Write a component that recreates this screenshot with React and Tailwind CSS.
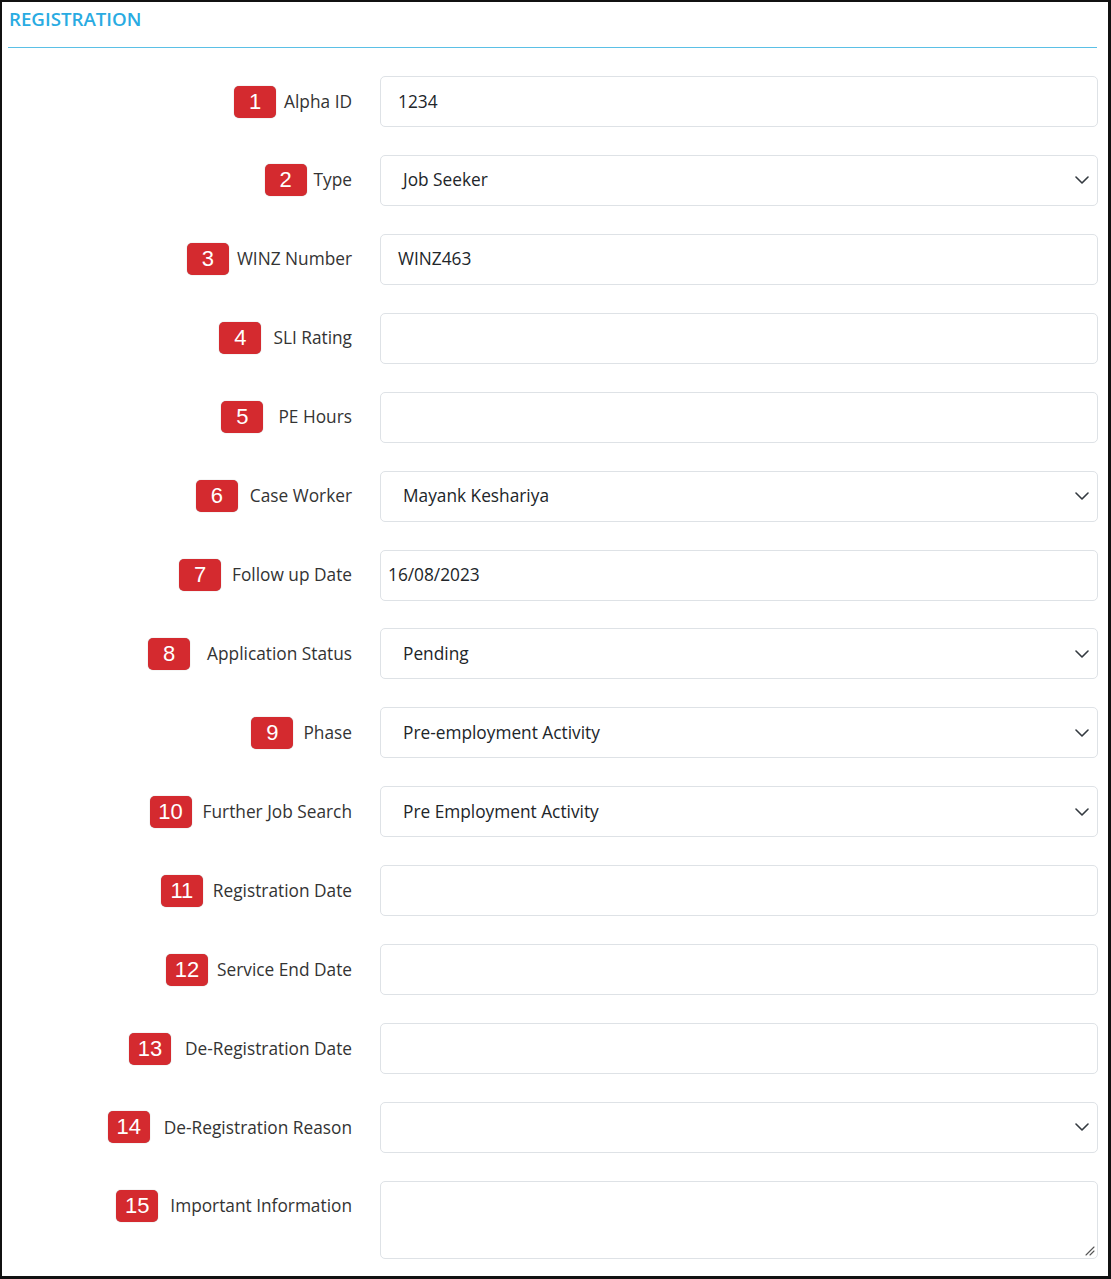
import React from "react";

const rows = [
  { n: "1", label: "Alpha ID", kind: "input", value: "1234", pad: "pl-[17px]", gap: "gap-[8px]" },
  { n: "2", label: "Type", kind: "select", value: "Job Seeker", gap: "gap-[7px]" },
  { n: "3", label: "WINZ Number", kind: "input", value: "WINZ463", pad: "pl-[17px]", gap: "gap-[8px]" },
  { n: "4", label: "SLI Rating", kind: "input", value: "", pad: "pl-[17px]", gap: "gap-[12px]" },
  { n: "5", label: "PE Hours", kind: "input", value: "", pad: "pl-[17px]", gap: "gap-[15px]" },
  { n: "6", label: "Case Worker", kind: "select", value: "Mayank Keshariya", gap: "gap-[12px]" },
  { n: "7", label: "Follow up Date", kind: "input", value: "16/08/2023", pad: "pl-[7px]", gap: "gap-[11px]" },
  { n: "8", label: "Application Status", kind: "select", value: "Pending", gap: "gap-[17px]" },
  { n: "9", label: "Phase", kind: "select", value: "Pre-employment Activity", gap: "gap-[10px]" },
  { n: "10", label: "Further Job Search", kind: "select", value: "Pre Employment Activity", gap: "gap-[11px]" },
  { n: "11", label: "Registration Date", kind: "input", value: "", pad: "pl-[17px]", gap: "gap-[10px]" },
  { n: "12", label: "Service End Date", kind: "input", value: "", pad: "pl-[17px]", gap: "gap-[9px]" },
  { n: "13", label: "De-Registration Date", kind: "input", value: "", pad: "pl-[17px]", gap: "gap-[14px]" },
  { n: "14", label: "De-Registration Reason", kind: "select", value: "", gap: "gap-[14px]" },
  { n: "15", label: "Important Information", kind: "textarea", value: "", gap: "gap-[12px]" },
];

function Badge({ n }) {
  return (
    <span
      className="flex h-[32px] w-[42px] items-center justify-center rounded-[5px] bg-[#d42a2f] text-[22px] leading-none text-white shadow-[0_0_1px_rgba(0,0,0,0.4)]"
      style={{ fontFamily: '"Liberation Sans", Arial, sans-serif' }}
    >
      {n}
    </span>
  );
}

function Chevron() {
  return (
    <svg width="14" height="8" viewBox="0 0 14 8" fill="none" className="absolute right-[8px] top-1/2 -translate-y-1/2">
      <path d="M1 1l6 6 6-6" stroke="#343a40" strokeWidth="1.6" strokeLinecap="round" strokeLinejoin="round" />
    </svg>
  );
}

function Field({ row }) {
  if (row.kind === "textarea") {
    return (
      <div className="relative h-[78px] rounded-[5px] border border-[#dee2e6] bg-white">
        <svg width="12" height="12" viewBox="0 0 12 12" className="absolute bottom-[2px] right-[2px]">
          <path d="M11 3L3 11M11 7L7 11" stroke="#555" strokeWidth="1.1" strokeLinecap="round" />
        </svg>
      </div>
    );
  }
  if (row.kind === "select") {
    return (
      <div className="relative flex h-[51px] items-center rounded-[5px] border border-[#dee2e6] bg-white pl-[22px] text-[17.3px] text-[#212529]">
        {row.value}
        <Chevron />
      </div>
    );
  }
  return (
    <div className={`flex h-[51px] items-center rounded-[5px] border border-[#dee2e6] bg-white text-[17.3px] text-[#212529] ${row.pad}`}>
      {row.value}
    </div>
  );
}

export default function App() {
  return (
    <div
      className="h-[1279px] w-[1111px] border-2 border-r-[3px] border-b-[3px] border-[#111] bg-white"
      style={{ fontFamily: '"Open Sans", "Noto Sans", sans-serif' }}
    >
      <div className="px-[6px] pt-[5px]">
        <h1 className="h-[30px] pl-[1px] text-[18.7px] font-semibold leading-[24px] text-[#29abe2]">REGISTRATION</h1>
        <div className="mt-[10px] mr-[5px] h-px bg-[#5bc0e6]" />
      </div>
      <div className="mt-[28px] flex flex-col gap-[27.93px] pr-[10px]">
        {rows.map((row) => (
          <div key={row.n} className="flex items-start">
            <div className={`flex h-[51px] w-[350px] shrink-0 items-center justify-end ${row.gap}`}>
              <Badge n={row.n} />
              <span className="text-[17.3px] text-[#333]">{row.label}</span>
            </div>
            <div className="ml-[28px] flex-1">
              <Field row={row} />
            </div>
          </div>
        ))}
      </div>
    </div>
  );
}
